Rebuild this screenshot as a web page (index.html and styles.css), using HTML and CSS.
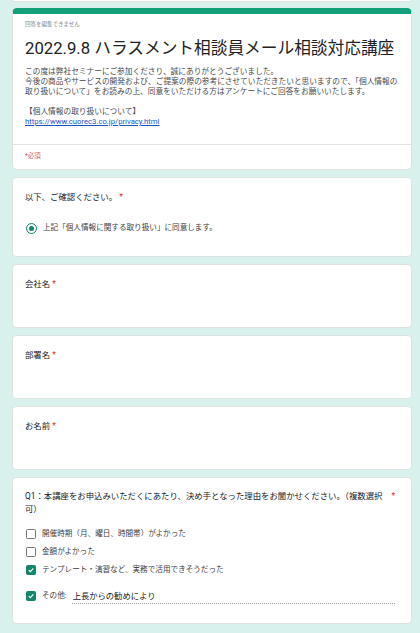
FILE: index.html
```html
<!DOCTYPE html>
<html lang="ja">
<head>
    <meta charset="UTF-8">
    <meta name="viewport" content="width=device-width, initial-scale=1.0">
    <title>2022.9.8 ハラスメント相談員メール相談対応講座</title>
    <link rel="stylesheet" href="styles.css">
</head>
<body>
    <div class="page">
        <div class="card card-prev"></div>

        <div class="card header">
            <div class="header-top">
                <p class="notice">回答を編集できません</p>
                <h1 class="title">2022.9.8 ハラスメント相談員メール相談対応講座</h1>
                <div class="desc">
                    <p>この度は弊社セミナーにご参加くださり、誠にありがとうございました。</p>
                    <p>今後の商品やサービスの開発および、ご提案の際の参考にさせていただきたいと思いますので、「個人情報の<br>取り扱いについて」をお読みの上、同意をいただける方はアンケートにご回答をお願いいたします。</p>
                    <p>&nbsp;</p>
                    <p>【個人情報の取り扱いについて】</p>
                    <p><a href="#">https://www.cuorec3.co.jp/privacy.html</a></p>
                </div>
            </div>
            <div class="required-note">*必須</div>
        </div>

        <div class="card question q-confirm">
            <div class="q-title">以下、ご確認ください。 <span class="star">*</span></div>
            <div class="option">
                <span class="radio"><span class="radio-dot"></span></span>
                <span class="opt-label">上記「個人情報に関する取り扱い」に同意します。</span>
            </div>
        </div>

        <div class="card question q-text">
            <div class="q-title">会社名 <span class="star">*</span></div>
        </div>

        <div class="card question q-text">
            <div class="q-title">部署名 <span class="star">*</span></div>
        </div>

        <div class="card question q-text">
            <div class="q-title">お名前 <span class="star">*</span></div>
        </div>

        <div class="card question q-check">
            <div class="q-head">
                <div class="q-title">Q1：本講座をお申込みいただくにあたり、決め手となった理由をお聞かせください。（複数選択可）</div>
                <span class="star">*</span>
            </div>
            <div class="options">
                <div class="option">
                    <span class="box"></span>
                    <span class="opt-label">開催時期（月、曜日、時間帯）がよかった</span>
                </div>
                <div class="option">
                    <span class="box"></span>
                    <span class="opt-label">金額がよかった</span>
                </div>
                <div class="option">
                    <span class="box checked">
                        <svg viewBox="0 0 10 10" width="10" height="10"><path d="M2.2 5.2 L4.2 7.1 L7.9 3.1" fill="none" stroke="#fff" stroke-width="1.4"/></svg>
                    </span>
                    <span class="opt-label">テンプレート・演習など、実務で活用できそうだった</span>
                </div>
                <div class="option other">
                    <span class="box checked">
                        <svg viewBox="0 0 10 10" width="10" height="10"><path d="M2.2 5.2 L4.2 7.1 L7.9 3.1" fill="none" stroke="#fff" stroke-width="1.4"/></svg>
                    </span>
                    <span class="opt-label">その他:</span>
                    <span class="other-input">上長からの勧めにより</span>
                </div>
            </div>
        </div>
    </div>
</body>
</html>
```

FILE: styles.css
```css
* {
    margin: 0;
    padding: 0;
    box-sizing: border-box;
}

body {
    background-color: #d9f1ec;
    font-family: Roboto, "Noto Sans CJK JP", sans-serif;
    color: #202124;
    overflow: hidden;
}

.page {
    display: flex;
    flex-direction: column;
    gap: 7px;
    padding: 0 8px 0 12px;
}

.card {
    background-color: #fff;
    border: 1px solid #dde3e1;
    border-radius: 4px;
    width: 400px;
}

.card-prev {
    height: 3px;
    border-top: none;
    border-radius: 0 0 4px 4px;
    margin-bottom: -1px;
    margin-top: -1px;
}

.header {
    border-top: 6px solid #12a07a;
    border-radius: 5px;
}

.header-top {
    padding: 6px 4px 17px 12px;
    border-bottom: 1px solid #e3e3e3;
}

.notice {
    font-size: 5.5px;
    line-height: 8px;
    color: #80868b;
}

.title {
    font-weight: 400;
    font-size: 16.7px;
    line-height: 22px;
    margin-top: 10px;
    color: #202124;
    white-space: nowrap;
}

.desc {
    margin-top: 7px;
    font-size: 7.7px;
    line-height: 10px;
    color: #4a4a4a;
}

.desc a {
    color: #1a57c4;
}

.required-note {
    padding: 6px 12px 8px;
    font-size: 6.5px;
    line-height: 10px;
    color: #d4605a;
}

.question {
    padding: 13px 13px 0 12px;
}

.q-title {
    font-size: 8.4px;
    line-height: 12px;
    color: #202124;
}

.star {
    color: #d93025;
}

.q-confirm {
    height: 80px;
    padding-top: 13px;
}

.q-confirm .option {
    margin-top: 19px;
}

.q-text {
    height: 64px;
}

.q-check {
    height: 147px;
    padding-top: 12px;
}

.q-head {
    display: flex;
    gap: 4px;
}

.q-head .q-title {
    flex: 1;
    line-height: 13px;
}

.q-head .star {
    font-size: 8.4px;
    line-height: 13px;
    padding-right: 3px;
}

.options {
    margin-top: 12px;
    display: flex;
    flex-direction: column;
    gap: 6px;
}

.option {
    display: flex;
    align-items: center;
    height: 12px;
    padding-left: 1px;
}

.opt-label {
    font-size: 7.6px;
    line-height: 12px;
    color: #3c4043;
    margin-left: 6px;
}

.radio {
    width: 11px;
    height: 11px;
    border: 1.5px solid #14866a;
    border-radius: 50%;
    display: flex;
    align-items: center;
    justify-content: center;
}

.radio-dot {
    width: 5px;
    height: 5px;
    border-radius: 50%;
    background-color: #14866a;
}

.box {
    width: 10px;
    height: 10px;
    border: 1.5px solid #757575;
    border-radius: 1.5px;
    display: flex;
    align-items: center;
    justify-content: center;
    flex-shrink: 0;
}

.box.checked {
    background-color: #14866a;
    border-color: #14866a;
}

.box svg {
    display: block;
}

.option.other {
    margin-top: 7px;
    height: 14px;
}

.other-input {
    flex: 1;
    margin-left: 5px;
    margin-right: 3px;
    font-size: 8.3px;
    line-height: 13px;
    color: #202124;
    border-bottom: 1px dotted #9aa0a6;
    margin-top: 2px;
    padding-left: 1px;
}
```
